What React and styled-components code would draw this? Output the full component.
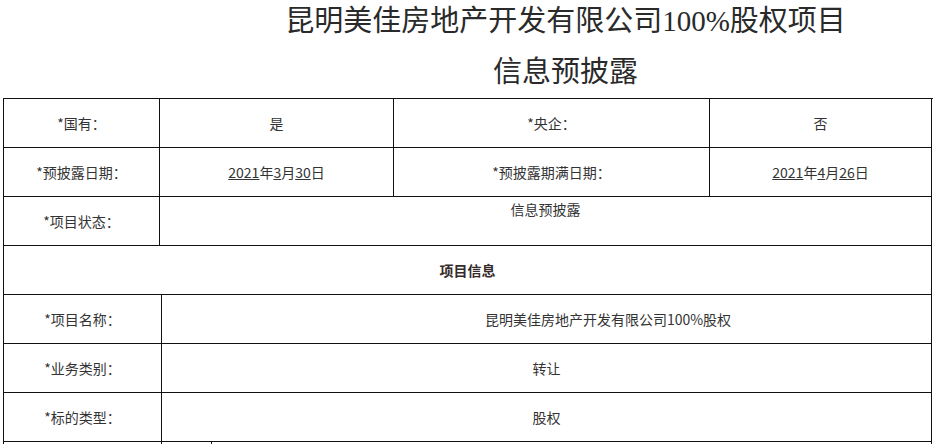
import React from "react";
import styled, { createGlobalStyle } from "styled-components";

const GlobalStyle = createGlobalStyle`
  body {
    margin: 0;
    background: #fff;
    font-family: "Noto Sans CJK SC", "Liberation Sans", sans-serif;
    color: #333;
  }
`;

const Heading = styled.div`
  margin-top: -4px;
  padding-left: 196px;
  text-align: center;
  font-family: "Liberation Serif", "Noto Sans CJK SC", serif;
  font-size: 29px;
  line-height: 51px;
  color: #2a2a2a;
`;

const Table = styled.div`
  margin-left: 3px;
  width: 929px;
  border-top: 1px solid #111;
  border-left: 1px solid #111;
`;

const Row = styled.div`
  display: grid;
  grid-template-columns: ${({ cols }) => cols};
  height: ${({ h }) => h || "49px"};
  overflow: hidden;
`;

const Cell = styled.div`
  border-right: 1px solid #111;
  border-bottom: 1px solid #111;
  display: flex;
  justify-content: center;
  align-items: ${({ top }) => (top ? "flex-start" : "center")};
  padding-top: ${({ top }) => (top ? "2px" : "0")};
  padding-left: ${({ shift }) => shift || "0"};
  font-size: 14px;
  line-height: 20px;
  color: #333;
  white-space: nowrap;
`;

const SectionCell = styled(Cell)`
  font-weight: bold;
  color: #352b2b;
`;

const U = styled.span`
  text-decoration: underline;
`;

const TOP = "156px 234px 316px 222px";
const BOTTOM = "158px 770px";

const infoRows = [
  { label: "*项目名称：", value: "昆明美佳房地产开发有限公司100%股权", shift: "123px" },
  { label: "*业务类别：", value: "转让" },
  { label: "*标的类型：", value: "股权" },
];

export default function App() {
  return (
    <>
      <GlobalStyle />
      <Heading>
        昆明美佳房地产开发有限公司100%股权项目
        <br />
        信息预披露
      </Heading>
      <Table>
        <Row cols={TOP}>
          <Cell>*国有：</Cell>
          <Cell>是</Cell>
          <Cell>*央企：</Cell>
          <Cell>否</Cell>
        </Row>
        <Row cols={TOP}>
          <Cell>*预披露日期：</Cell>
          <Cell>
            <U>2021</U>年<U>3</U>月<U>30</U>日
          </Cell>
          <Cell>*预披露期满日期：</Cell>
          <Cell>
            <U>2021</U>年<U>4</U>月<U>26</U>日
          </Cell>
        </Row>
        <Row cols="156px 772px">
          <Cell>*项目状态：</Cell>
          <Cell top>信息预披露</Cell>
        </Row>
        <Row cols="928px">
          <SectionCell>项目信息</SectionCell>
        </Row>
        {infoRows.map((r) => (
          <Row cols={BOTTOM} key={r.label}>
            <Cell>{r.label}</Cell>
            <Cell shift={r.shift}>{r.value}</Cell>
          </Row>
        ))}
        <Row cols="158px 50px 720px" h="3px">
          <Cell />
          <Cell />
          <Cell />
        </Row>
      </Table>
    </>
  );
}
